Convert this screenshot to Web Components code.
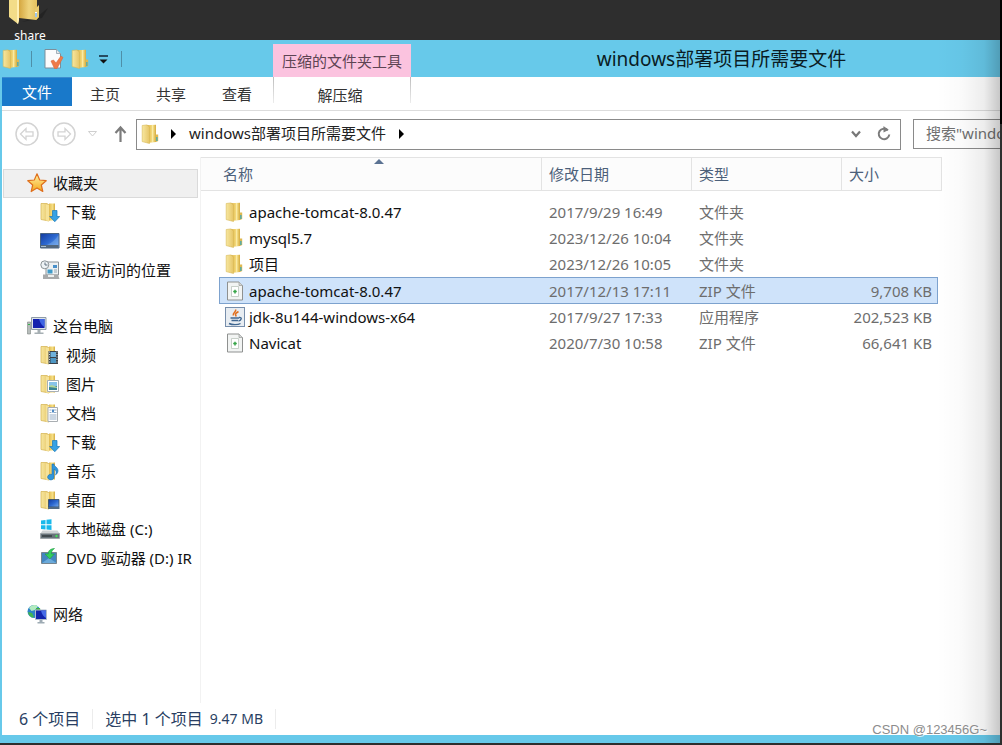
<!DOCTYPE html>
<html lang="zh-CN">
<head>
<meta charset="utf-8">
<title>windows部署项目所需要文件</title>
<style>
  html { height: 100%; }
  body {
    margin: 0; min-height: 100vh; display: flex; flex-direction: column; position: relative; overflow: hidden;
    font: 15px/20px "Noto Sans", "Noto Sans CJK SC", sans-serif; color: #000;
    background: linear-gradient(#000, #000) right top / 2px 124px no-repeat, #2e2e2e;
  }
  explorer-window { flex: 1; }
</style>
</head>
<body>
<desktop-strip><desktop-shortcut>share</desktop-shortcut></desktop-strip>
<explorer-window>
  <title-bar context="压缩的文件夹工具">windows部署项目所需要文件</title-bar>
  <ribbon-tabs></ribbon-tabs>
  <address-row></address-row>
  <nav-pane slot="nav">
    <nav-group>
      <nav-item icon="star" level="root" current>收藏夹</nav-item>
      <nav-item icon="download">下载</nav-item>
      <nav-item icon="desktop">桌面</nav-item>
      <nav-item icon="recent">最近访问的位置</nav-item>
    </nav-group>
    <nav-group>
      <nav-item icon="computer" level="root">这台电脑</nav-item>
      <nav-item icon="video">视频</nav-item>
      <nav-item icon="picture">图片</nav-item>
      <nav-item icon="document">文档</nav-item>
      <nav-item icon="download">下载</nav-item>
      <nav-item icon="music">音乐</nav-item>
      <nav-item icon="deskfolder">桌面</nav-item>
      <nav-item icon="drive">本地磁盘 (C:)</nav-item>
      <nav-item icon="dvd">DVD 驱动器 (D:) IR</nav-item>
    </nav-group>
    <nav-group>
      <nav-item icon="network" level="root">网络</nav-item>
    </nav-group>
  </nav-pane>
  <file-list slot="files"></file-list>
  <status-bar slot="status"></status-bar>
</explorer-window>
<water-mark>CSDN @123456G~</water-mark>

<script>
const define = (name, html, setup) => customElements.define(name, class extends HTMLElement {
  constructor() {
    super();
    this.attachShadow({ mode: 'open' });
  }
  connectedCallback() {
    this.shadowRoot.innerHTML = html;
    if (setup) setup(this, this.shadowRoot);
  }
});

const gold = `<defs>
  <linearGradient id="a"><stop offset="0" stop-color="#f7e79f"/><stop offset="1" stop-color="#e6c567"/></linearGradient>
  <linearGradient id="b"><stop offset="0" stop-color="#bf8f2c"/><stop offset=".35" stop-color="#e9c55c"/><stop offset=".7" stop-color="#f5df86"/><stop offset="1" stop-color="#d5ab40"/></linearGradient>
  <linearGradient id="s" x2="1" y2="1"><stop offset="0" stop-color="#123a9e"/><stop offset=".5" stop-color="#2c68d0"/><stop offset="1" stop-color="#79aef0"/></linearGradient></defs>`;
const folder = gold + `<path d="M5 1.200 15 .800V18l-9 1z" fill="url(#b)"/><path d="M11.500 1v17" stroke="#faeaa5" stroke-width="1.200"/><path d="M15 10.500h2.200v6.500l-2.200 1z" fill="#dfb850"/><path d="M15.200 13h1.300v4h-1.300z" fill="#3fa9b8"/><path d="M1.200 1.500 6 .900l2.500 2V19.500L1.200 17.600z" fill="url(#a)" stroke="#d9b856" stroke-width=".6"/>`;
const mini = gold + `<path d="M1 1.500h6L9 3v16l-8-1.500z" fill="url(#a)" stroke="#d2b04c" stroke-width=".7"/><path d="M9 1.500h6v17H7z" fill="url(#b)"/><path d="M6 2.500 9 3v16.200l-3-.8z" fill="#f6e298"/>`;
const arrowDown = `<path d="M12.500 8.500h4.500v6h2.700L14.800 19.700 9.700 14.500h2.800z" fill="#36a1e4" stroke="#1777b8" stroke-width=".7"/>`;
const zip = `<path d="M2.500 1h11.500l3.500 3.500V19h-15z" fill="#f2f4f3" stroke="#8f9190"/><path d="M14 1v3.500h3.500" fill="#d5d8d7" stroke="#999b9a" stroke-width=".7"/><path d="M6.500 5.500h7v10h-7z" fill="#fff" stroke="#bbc5bd" stroke-width=".8"/><path d="M10 8.800v3.600M8.200 10.600h3.600" stroke="#37a548" stroke-width="1.500"/>`;
const ICONS = {
  folder,
  download: mini + arrowDown,
  music: mini + `<path d="M12 3v10.500a3.200 2.800 0 1 0 2 2.500V8c2.500 1.500 2.500 3.500 1.500 6 3.500-2.500 3-6 .5-8-1.200-1-2-1.500-2-3z" fill="#3096dc" stroke="#1b6fae" stroke-width=".6"/>`,
  video: mini + `<path d="M8.500 6h9.500v13H8.500z" fill="#3b434a"/><path d="M10.500 7h5.500v5h-5.500z" fill="#6eb2dc"/><path d="M10.500 13h5.500v5h-5.500z" fill="#4d97c4"/><path d="M9.500 6.500v12M17 6.500v12" stroke="#cfd6da" stroke-dasharray="1 1.500"/>`,
  picture: mini + `<path d="M7.500 6.500h11v11h-11z" fill="#fff" stroke="#a7afb5"/><path d="M9 8h8v4H9z" fill="#87c3e9"/><path d="M9 12h8v4H9z" fill="#3a8394"/><path d="M9 12l3-1 5 2v1l-8-1z" fill="#b2d59a"/>`,
  document: mini + `<path d="M8 4.500h9.500v14H8z" fill="#fff" stroke="#a9aeb2"/><path d="M9.500 7h2M14 7h2.500M9.500 9.500h2M14 9.500h2.500M9.500 12h7M9.500 14h7M9.500 16h7" stroke="#8aa4be" stroke-width=".9"/><path d="M12 6.500h2v3h-2z" fill="#4f8ac4"/>`,
  deskfolder: mini + `<path d="M8.500 9.500h10.500v7.500H8.500z" fill="url(#s)" stroke="#34495e" stroke-width=".8"/><path d="M8 17h11.500v2H8z" fill="#526a82"/>`,
  desktop: gold + `<path d="M.500 2.500h18.500v14.500H.500z" fill="url(#s)" stroke="#486383"/><path d="M1 14h17.500v3H1z" fill="#52677d"/><path d="M1 15.500h5" stroke="#a8bfd1"/><path d="M7 14Q14 11 18.500 4v10z" fill="#8fc0f4" opacity=".35"/>`,
  star: `<defs><linearGradient id="g" y2="1" x2="0"><stop offset="0" stop-color="#fff3a5"/><stop offset="1" stop-color="#f5a81c"/></linearGradient></defs><path d="M10 .800l2.700 6.200 6.500.7-4.900 4.300 1.500 6.500-5.800-3.400-5.800 3.400 1.500-6.500L.800 7.700l6.500-.7z" fill="url(#g)" stroke="#df6f1c" stroke-width="1.200" stroke-linejoin="round"/>`,
  recent: `<path d="M6 2h12.500v13H6z" fill="#eef1f2" stroke="#8b9296"/><path d="M13 5h4v3h-4z" fill="#4a90c9"/><path d="M7.500 9.500h5v4h-5z" fill="#3f9bc9"/><path d="M14 10h3M14 12h3" stroke="#93a9b6"/><path d="M3 14.500h15l1.500 4.500H3z" fill="#a8aaab"/><path d="M8 15h6v2H8z" fill="#ecefee"/><circle cx="4.800" cy="4.800" r="4" fill="#eef3f5" stroke="#8b9396"/><path d="M5 2.500V5h2.500" fill="none" stroke="#607080"/>`,
  computer: `<path d="M.500 6h3v12h-3z" fill="#b7bdbb" stroke="#7d8582" stroke-width=".6"/><path d="M1 8.500h2" stroke="#35b04a" stroke-width="1.200"/><path d="M4.500 1.500h14.500v12H4.500z" fill="#dce3e9" stroke="#8e9ba7"/><path d="M6 3h11.500v9H6z" fill="#121fae"/><path d="M12 3h5.500v8c-2-1-4.500-4-5.500-8z" fill="#3e65e3"/><path d="M10.500 14h3v2.500h3V18h-9v-1.500h3z" fill="#a6afb3"/>`,
  drive: `<g fill="#18b9eb"><path d="M1 1.500 5.500 1v4.300H1z"/><path d="M6.500.8 11.500.2v5.100h-5z"/><path d="M1 6.300h4.500v4.200L1 9.900z"/><path d="M6.500 6.300h5v4.700l-5-.6z"/></g><path d="M2.500 11.500h15l2 3H.500z" fill="#cfd3d5"/><path d="M.500 14.500h19v5H.500z" fill="#68737a" stroke="#969da1" stroke-width=".7"/><path d="M2 17h10" stroke="#343c41" stroke-width="1.500"/><circle cx="16.500" cy="17" r="1.200" fill="#42e057"/>`,
  dvd: `<path d="M1.500 4.500h15v11h-15z" fill="#4386c0" stroke="#76858f"/><path d="M2 15l7-5 7.500 5z" fill="#6baada"/><path d="M14.500.500C10 .800 8 3 8.300 6H5l4.700 5 4.600-5h-3c0-2.500 1-4 3.200-5.500z" fill="#36cf5c" stroke="#1e9d3f" stroke-width=".6"/>`,
  network: `<circle cx="7" cy="7.500" r="6.500" fill="#2c83c9"/><path d="M2 4C4 1 8 0 11 2.500L8 6 4.500 7z" fill="#b2ebbf"/><path d="M1 8l4 1 2 4-2 .5C3 12.500 1.200 10.500 1 8z" fill="#41b64f"/><path d="M9 4l4 0 .5 3H9z" fill="#3cae4a"/><path d="M8.500 6h11v9.500h-11z" fill="#1224ab" stroke="#b0bdcb"/><path d="M14 6.500h5v7.500c-2-1-4-3-5-7.500z" fill="#466ce8"/><path d="M12.500 16h3v2h2v1.500h-7V18h2z" fill="#9eabb4"/>`,
  zip,
  java: `<rect x=".500" y=".500" width="19" height="19" fill="#e8edf2" stroke="#778eab"/><path d="M10.500 2.500c1.500 2-3.500 3.500-2 6M13.500 4.500c-3.500 2-3.500 2.500-2.300 5" fill="none" stroke="#e2701f" stroke-width="1.600"/><path d="M5.500 11h8.500M6.500 13.500h6.500M4 16.500c3 1.500 9 1.500 11.500 0M14 10.500c3.500-.5 2.500 3-.5 3.500" fill="none" stroke="#3f6690" stroke-width="1.400"/>`,
  check: `<path d="M1 .500h11.500l4 4v14.500H1z" fill="#fbfcfd" stroke="#7c8f9b"/><path d="M12.500.500v4h4" fill="#e2e8ec" stroke="#8fa0ab" stroke-width=".8"/><path d="M7 12l2.500-1 2.500 3L17 7l2 1.500-6 11h-2.500z" fill="#ef7a48" stroke="#d9683a" stroke-width=".6"/>`,
  back: `<circle cx="12" cy="12" r="11" fill="#fff" stroke="#d3d3d3" stroke-width="1.500"/><path d="M5.500 12l5.500-5.500v3.300h7v4.400h-7v3.300z" fill="none" stroke="#d3d3d3" stroke-width="1.300"/>`,
  forward: `<circle cx="12" cy="12" r="11" fill="#fff" stroke="#d3d3d3" stroke-width="1.500"/><path d="M18.500 12L13 6.500v3.300H6v4.400h7v3.300z" fill="none" stroke="#d3d3d3" stroke-width="1.300"/>`,
  history: `<path d="M6.500 7.500h8l-4 4.500z" fill="none" stroke="#cfcfcf"/>`,
  up: `<path d="M10.500 18V4M5.500 9l5-5.500 5 5.500" fill="none" stroke="#7c7c7c" stroke-width="2.200"/>`,
  chevron: `<path d="M6 7.500l4 4.500 4-4.500" fill="none" stroke="#777" stroke-width="2.200"/>`,
  refresh: `<path d="M13.800 6.200A5.300 5.300 0 1 0 15.300 10.500" fill="none" stroke="#7c7c7c" stroke-width="2"/><path d="M9.500 2l5 4-5 2.500z" fill="#7c7c7c"/>`,
  crumb: `<path d="M8 5l5 5-5 5z" fill="#000"/>`,
  menu: `<path d="M5 7h9" stroke="#123" stroke-width="1.500"/><path d="M5.500 10.500h8l-4 4z" fill="#111"/>`
};
define('fx-icon', `<style>
  :host { display: block; flex: none; width: 20px; height: 20px; }
  :host([name="back"]), :host([name="forward"]) { width: 24px; height: 24px; }
  svg { display: block; width: 100%; height: 100%; }
</style>`, (el, root) => {
  const n = el.getAttribute('name'), s = n === 'back' || n === 'forward' ? 24 : 20;
  root.innerHTML += `<svg viewBox="0 0 ${s} ${s}" aria-hidden="true">${ICONS[n]}</svg>`;
});

define('desktop-strip', `<style>:host { display: block; height: 40px; overflow: hidden; flex: none; }</style><slot></slot>`);
define('desktop-shortcut', `<style>
  :host { display: flex; flex-direction: column; align-items: center; width: 60px; color: #fff; font-size: 12px; line-height: 16px; }
  svg { display: block; width: 60px; height: 28px; }
</style>
<svg viewBox="0 0 60 28" aria-hidden="true"><defs><linearGradient id="f"><stop offset="0" stop-color="#d5a740"/><stop offset=".5" stop-color="#efd47d"/><stop offset="1" stop-color="#e0ba56"/></linearGradient></defs>
<path d="M38 16l10-8-6 10-20 4z" fill="#1d1d1d" opacity=".6"/><path d="M19 0h18v8l2 1v8l-3 3-17-2z" fill="url(#f)"/><path d="M35 9l4-4v12l-3 3z" fill="#e9ca6f"/><path d="M35 12h2v5h-2z" fill="#fff"/><path d="M36 13v4" stroke="#3e8bd2"/><path d="M9 0h10v20l-1 4L9 17z" fill="#f3dc88"/><path d="M17 0h2v20l-1 4-1-1z" fill="#fff0b5"/></svg>
<slot></slot>`);

define('explorer-window', `<style>
  :host { display: flex; flex-direction: column; position: relative; overflow: hidden; margin: 0 2px 2px 0; background: #67c9ea; }
  .client { flex: 1; display: flex; flex-direction: column; margin: 0 0 8px 2px; background: #fff; }
  .panes { flex: 1; display: grid; grid-template-columns: 199px minmax(0, 1fr); }
  .shade { position: absolute; inset: 0 0 0 auto; width: 64px; pointer-events: none;
    background: linear-gradient(to right, transparent, rgba(0,0,0,.02) 40%, rgba(0,0,0,.07) 75%, rgba(0,0,0,.22)); }
</style>
<slot name="title"></slot>
<div class="client"><slot></slot><div class="panes"><slot name="nav"></slot><slot name="files"></slot></div><slot name="status"></slot></div>
<div class="shade"></div>`, el => { el.querySelector('title-bar').slot = 'title'; });

define('title-bar', `<style>
  :host { display: flex; align-items: center; height: 37px; flex: none; }
  .quick { display: flex; align-items: center; width: 273px; flex: none; padding-left: 2px; box-sizing: border-box; }
  button { border: 0; padding: 0; background: none; }
  .sep { width: 1px; height: 16px; background: #4e8fa8; margin: 0 9px; }
  .check { margin: 0 7px 0 3px; }
  .menu { margin-left: 3px; }
  .menu + .sep { margin-left: 7px; }
  .context { align-self: flex-end; width: 138px; height: 33px; line-height: 34px; text-align: center; background: #fbc3df; color: #5d4453; flex: none; }
  h1 { flex: 1; margin: 0; padding-left: 32px; text-align: center; font-size: 19px; font-weight: 400; line-height: 28px; color: #0a1c24; white-space: nowrap; }
</style>
<div class="quick"><fx-icon name="folder"></fx-icon><span class="sep"></span>
<button class="check" aria-label="属性"><fx-icon name="check"></fx-icon></button><button aria-label="新建文件夹"><fx-icon name="folder"></fx-icon></button>
<button class="menu" aria-label="自定义"><fx-icon name="menu"></fx-icon></button><span class="sep"></span></div>
<div class="context"></div><h1><slot></slot></h1>`, (el, root) => { root.querySelector('.context').textContent = el.getAttribute('context'); });

define('ribbon-tabs', `<style>
  :host { display: flex; height: 33px; flex: none; border-bottom: 1px solid #dcdcdc; }
  button { font: inherit; line-height: 20px; border: 0; background: none; color: #333; padding: 1px 0 0; width: 66px; }
  .file { width: 70px; height: 29px; padding: 0 0 1px; background: #1979ca; color: #fff; border-top: 1px solid #3b8dd0; }
  .extract { width: 138px; height: 26px; padding: 8px 4px 0 0; margin-left: 3px; box-sizing: border-box; border: solid; border-width: 0 1px;
    border-image: linear-gradient(#bbb, #eee) 1; }
  .file, .extract { flex: none; }
</style>
<button class="file">文件</button><button>主页</button><button>共享</button><button>查看</button><button class="extract">解压缩</button>`);

define('address-row', `<style>
  :host { display: flex; align-items: center; height: 46px; flex: none; }
  button { font: inherit; color: inherit; border: 0; padding: 0; background: none; }
  .back { margin: 0 13px; }
  .hist { margin-left: 6px; }
  .up { margin: 0 6px 0 8px; }
  .path { flex: 1; display: flex; align-items: center; height: 29px; border: 1px solid #8a8a8a; padding: 0 6px 0 4px; color: #222; }
  .path > fx-icon { margin-right: 2px; }
  .name { padding: 0 5px 3px 6px; }
  .end { margin-left: auto; margin-right: 8px; }
  input { width: 87px; height: 30px; box-sizing: border-box; margin-left: 12px; padding: 0 0 2px 12px; font: inherit; border: 1px solid #8a8a8a; border-right: 0; border-radius: 0; background: #fff; outline: 0; }
  input::placeholder { color: #707070; opacity: 1; }
</style>
<button class="back" aria-label="后退"><fx-icon name="back"></fx-icon></button><button aria-label="前进"><fx-icon name="forward"></fx-icon></button>
<button class="hist" aria-label="最近位置"><fx-icon name="history"></fx-icon></button><button class="up" aria-label="向上"><fx-icon name="up"></fx-icon></button>
<div class="path"><fx-icon name="folder"></fx-icon><button aria-label="展开"><fx-icon name="crumb"></fx-icon></button><button class="name">windows部署项目所需要文件</button><button aria-label="子文件夹"><fx-icon name="crumb"></fx-icon></button>
<button class="end" aria-label="历史"><fx-icon name="chevron"></fx-icon></button><button aria-label="刷新"><fx-icon name="refresh"></fx-icon></button></div>
<input type="text" aria-label="搜索" placeholder="搜索&quot;windo">`);

define('nav-pane', `<style>
  :host { display: flex; flex-direction: column; gap: 27px; padding: 12px 2px 0 1px; border-right: 1px solid #f2f2f2; min-width: 0; }
</style><slot></slot>`);
define('nav-group', `<style>:host { display: block; }</style><slot></slot>`);
define('nav-item', `<style>
  :host { display: block; }
  a { display: flex; align-items: center; gap: 6px; height: 29px; box-sizing: border-box; padding: 0 0 2px 36px; border: 1px solid transparent; color: #111; text-decoration: none; white-space: nowrap; overflow: hidden; }
  :host([level="root"]) a { padding-left: 23px; }
  :host([current]) a { background: #f0f0f0; border-color: #dadada; }
</style><a href="#"><fx-icon></fx-icon><span><slot></slot></span></a>`, (el, root) => {
  root.querySelector('fx-icon').replaceWith(Object.assign(document.createElement('template'), { innerHTML: `<fx-icon name="${el.getAttribute('icon')}"></fx-icon>` }).content);
});

const FILES = [
  ['folder', 'apache-tomcat-8.0.47', '2017/9/29 16:49', '文件夹', ''],
  ['folder', 'mysql5.7', '2023/12/26 10:04', '文件夹', ''],
  ['folder', '项目', '2023/12/26 10:05', '文件夹', ''],
  ['zip', 'apache-tomcat-8.0.47', '2017/12/13 17:11', 'ZIP 文件', '9,708 KB', true],
  ['java', 'jdk-8u144-windows-x64', '2017/9/27 17:33', '应用程序', '202,523 KB'],
  ['zip', 'Navicat', '2020/7/30 10:58', 'ZIP 文件', '66,641 KB']
];
define('file-list', `<style>
  :host { display: block; min-width: 0; }
  table { width: 741px; table-layout: fixed; border-collapse: separate; border-spacing: 0; }
  .c-name { width: 341px; } .c-mid { width: 150px; }
  th { position: relative; box-sizing: border-box; height: 34px; padding: 0 0 0 7px; text-align: left; font-weight: 400; color: #4c607a; background: #fcfcfc; border: solid #e3e3e3; border-width: 1px 1px 1px 0; }
  th:first-child { padding-left: 22px; }
  th svg { position: absolute; top: 1px; left: 51%; width: 10px; height: 5px; }
  tbody::before { content: ""; display: block; height: 8px; }
  td { padding: 0; color: #6d6d6d; }
  .cell { display: flex; align-items: center; height: 26px; padding-left: 7px; white-space: nowrap; }
  td:first-child .cell { margin-left: 18px; padding-left: 5px; gap: 4px; border-left: 1px solid transparent; color: #111; }
  td:last-child .cell { margin-right: 4px; padding-right: 5px; justify-content: flex-end; border-right: 1px solid transparent; }
  .selected .cell { height: 25px; background: #cfe3fa; border: solid #7da2ce; border-width: 1px 0; }
  .selected td:first-child .cell { border-color: #7da2ce; border-left-width: 1px; }
  .selected td:last-child .cell { border-color: #7da2ce; border-right-width: 1px; }
</style>
<table><colgroup><col class="c-name"><col class="c-mid"><col class="c-mid"><col></colgroup>
<thead><tr><th>名称<svg viewBox="0 0 10 5" aria-hidden="true"><path d="M0 5l5-5 5 5z" fill="#5b7292"/></svg></th><th>修改日期</th><th>类型</th><th>大小</th></tr></thead>
<tbody></tbody></table>`, (el, root) => {
  root.querySelector('tbody').innerHTML = FILES.map(([i, n, d, t, s, sel]) =>
    `<tr${sel ? ' class="selected"' : ''}><td><div class="cell"><fx-icon name="${i}"></fx-icon><span>${n}</span></div></td><td><div class="cell">${d}</div></td><td><div class="cell">${t}</div></td><td><div class="cell">${s}</div></td></tr>`).join('');
});

define('status-bar', `<style>
  :host { display: flex; align-items: center; flex: none; height: 32px; padding-left: 17px; color: #2a3f63; font-size: 16px; white-space: nowrap; }
  .part { display: flex; align-items: center; gap: 7px; padding-right: 12px; margin-right: 12px; border-right: 1px solid #ececec; }
  .size { font-size: 14px; }
</style><span class="part">6 个项目</span><span class="part"><span>选中 1 个项目</span><span class="size">9.47 MB</span></span>`);

define('water-mark', `<style>
  :host { position: absolute; right: 15px; bottom: 5px; font: 13px/20px "Liberation Sans", sans-serif; color: #8c8c8c; text-shadow: 1px 1px 0 rgba(255,255,255,.75); }
</style><slot></slot>`);
</script>
</body>
</html>
